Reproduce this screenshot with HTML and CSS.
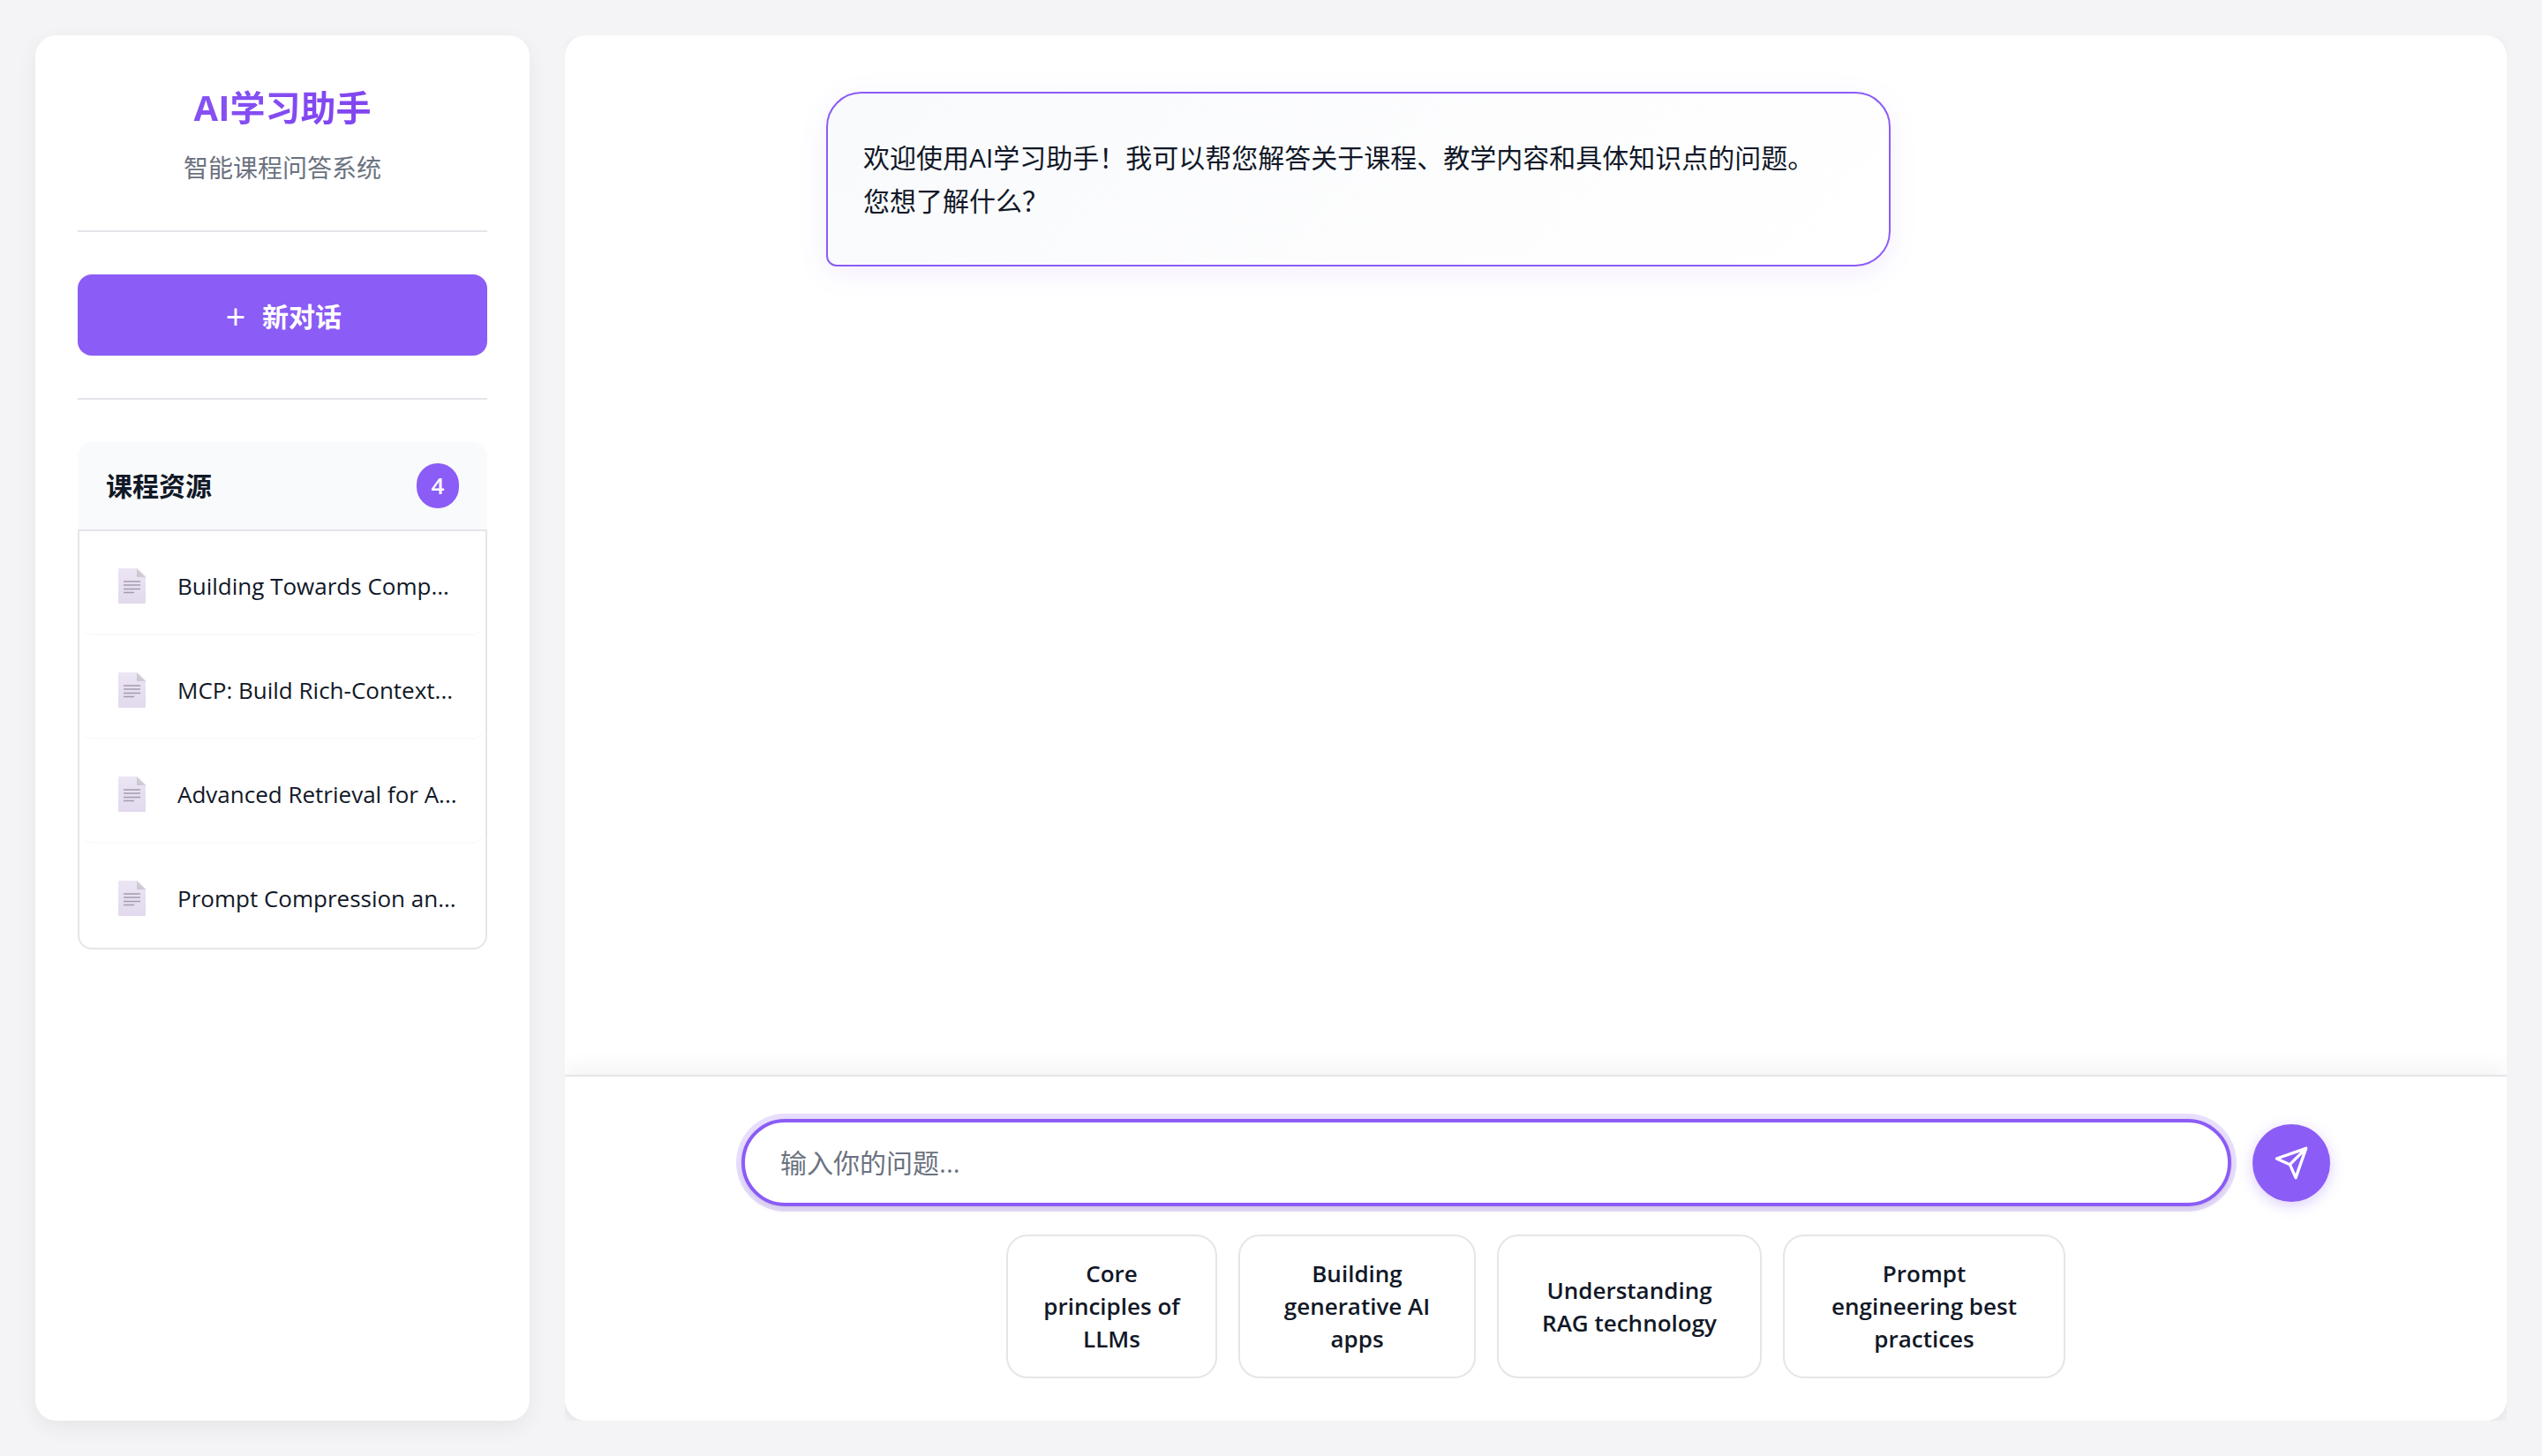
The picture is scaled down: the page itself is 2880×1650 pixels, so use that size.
FILE: index.html
```html
<!DOCTYPE html>
<html lang="zh-CN">
<head>
<meta charset="UTF-8">
<meta name="viewport" content="width=device-width, initial-scale=1">
<title>AI学习助手</title>
<link rel="stylesheet" href="styles.css">
</head>
<body>
<svg class="sprite" aria-hidden="true">
  <defs>
    <linearGradient id="page-fill" x1="0" y1="0" x2="0" y2="1">
      <stop offset="0" stop-color="#ece5f4"/>
      <stop offset="1" stop-color="#e2d9ee"/>
    </linearGradient>
    <linearGradient id="fold-fill" x1="0" y1="1" x2="1" y2="0">
      <stop offset="0" stop-color="#c9c3ce"/>
      <stop offset="1" stop-color="#dcd7e0"/>
    </linearGradient>
    <symbol id="doc" viewBox="0 0 31 40">
      <path d="M1 0H21L31 9V39Q31 40 30 40H1Q0 40 0 39V1Q0 0 1 0Z" fill="url(#page-fill)"/>
      <path d="M21 0L31 10H22Q21 10 21 9Z" fill="url(#fold-fill)"/>
      <path d="M6 15H25M6 19H25M6 23.500H25M6 27.500H18" stroke="#a49cae" stroke-width="1.500"/>
    </symbol>
  </defs>
</svg>
<div class="app">
  <aside class="sidebar">
    <header class="brand">
      <h1 class="brand-title">AI学习助手</h1>
      <p class="brand-subtitle">智能课程问答系统</p>
    </header>
    <div class="new-chat">
      <button class="new-chat-button" type="button"><span class="plus">+</span>新对话</button>
    </div>
    <section class="courses">
      <div class="courses-header">
        <h2 class="courses-title">课程资源</h2>
        <span class="badge">4</span>
      </div>
      <ul class="course-list">
        <li class="course"><svg class="doc-icon" aria-hidden="true"><use href="#doc"/></svg><span>Building Towards Comp...</span></li>
        <li class="course"><svg class="doc-icon" aria-hidden="true"><use href="#doc"/></svg><span>MCP: Build Rich-Context...</span></li>
        <li class="course"><svg class="doc-icon" aria-hidden="true"><use href="#doc"/></svg><span>Advanced Retrieval for A...</span></li>
        <li class="course"><svg class="doc-icon" aria-hidden="true"><use href="#doc"/></svg><span>Prompt Compression an...</span></li>
      </ul>
    </section>
  </aside>
  <main class="chat">
    <div class="chat-panel">
      <div class="messages">
        <div class="message">欢迎使用AI学习助手！我可以帮您解答关于课程、教学内容和具体知识点的问题。<br>您想了解什么？</div>
      </div>
      <footer class="composer">
        <form class="input-row">
          <input class="question" type="text" placeholder="输入你的问题..." aria-label="输入你的问题">
          <button class="send" type="button" aria-label="发送">
            <svg class="send-icon" viewBox="0 0 24 24" aria-hidden="true"><path d="M22 2L11 13M22 2L15 22L11 13L2 9Z"/></svg>
          </button>
        </form>
        <div class="suggestions">
          <button class="suggestion" type="button">Core principles of LLMs</button>
          <button class="suggestion" type="button">Building generative AI apps</button>
          <button class="suggestion" type="button">Understanding RAG technology</button>
          <button class="suggestion" type="button">Prompt engineering best practices</button>
        </div>
      </footer>
    </div>
  </main>
</div>
</body>
</html>
```
FILE: styles.css
```css
:root {
  --primary: #8b5cf6;
  --primary-dark: #7c3aed;
  --text: #111827;
  --muted: #6b7280;
  --border: #e5e5ea;
  --surface: #f9fafc;
  --page: #f4f4f7;
}

* {
  box-sizing: border-box;
  margin: 0;
  padding: 0;
}

body,
button,
input {
  font-family: "Open Sans", "Noto Sans CJK SC", sans-serif;
}

body {
  background: var(--page);
  color: var(--text);
}

button {
  border: 0;
  cursor: pointer;
}

.sprite {
  position: absolute;
  width: 0;
  height: 0;
}

.app {
  display: flex;
  gap: 40px;
  min-height: 100vh;
  padding: 40px;
}

.sidebar {
  flex: 0 0 560px;
  padding: 48px;
  border-radius: 24px;
  background: #fff;
  box-shadow: 0 8px 24px rgba(0, 0, 0, 0.06);
}

.brand {
  padding-bottom: 48px;
  border-bottom: 2px solid var(--border);
  text-align: center;
}

.brand-title {
  margin-bottom: 12px;
  background: linear-gradient(135deg, var(--primary), var(--primary-dark));
  background-clip: text;
  -webkit-background-clip: text;
  color: transparent;
  font-size: 40px;
  font-weight: 700;
  line-height: 68px;
}

.brand-subtitle {
  color: var(--muted);
  font-size: 28px;
  line-height: 45px;
}

.new-chat {
  padding: 48px 0;
  border-bottom: 2px solid var(--border);
}

.new-chat-button {
  display: flex;
  align-items: center;
  justify-content: center;
  gap: 16px;
  width: 100%;
  height: 92px;
  border-radius: 16px;
  background: var(--primary);
  color: #fff;
  font-size: 30px;
  font-weight: 700;
}

.plus {
  width: 28px;
  padding-top: 4px;
  font-size: 40px;
  font-weight: 400;
  line-height: 48px;
  text-align: center;
}

.courses {
  margin-top: 48px;
}

.courses-header {
  display: flex;
  align-items: center;
  justify-content: space-between;
  padding: 24px 32px;
  border-bottom: 2px solid var(--border);
  border-radius: 16px 16px 0 0;
  background: var(--surface);
}

.courses-title {
  font-size: 30px;
  font-weight: 700;
  line-height: 48px;
}

.badge {
  min-width: 48px;
  border-radius: 24px;
  background: var(--primary);
  color: #fff;
  font-size: 26px;
  font-weight: 600;
  line-height: 51px;
  text-align: center;
}

.course-list {
  display: flex;
  flex-direction: column;
  gap: 8px;
  padding-top: 8px;
  border: 2px solid var(--border);
  border-top: 0;
  border-radius: 0 0 16px 16px;
  list-style: none;
}

.course {
  display: flex;
  align-items: center;
  gap: 36px;
  height: 110px;
  padding: 0 32px 0 44px;
  border-bottom: 2px solid var(--surface);
  border-radius: 16px;
  font-size: 26px;
  line-height: 40px;
  white-space: nowrap;
}

.course:last-child {
  border-bottom-color: transparent;
}

.doc-icon {
  flex: none;
  width: 31px;
  height: 40px;
}

.chat {
  display: flex;
  flex: 1;
  min-width: 0;
  overflow: hidden;
}

.chat-panel {
  display: flex;
  flex: 1;
  flex-direction: column;
  min-width: 0;
  border-radius: 24px;
  background: #fff;
  box-shadow: 0 8px 24px rgba(0, 0, 0, 0.06);
}

.messages {
  flex: 1;
  width: 100%;
  max-width: 1800px;
  margin: 0 auto;
  padding: 64px 96px;
}

.message {
  width: 75%;
  padding: 48px 40px;
  border: 2px solid var(--primary);
  border-radius: 40px 40px 40px 12px;
  background: linear-gradient(135deg, var(--surface), #fff);
  box-shadow: 0 8px 32px rgba(139, 92, 246, 0.1);
  font-size: 30px;
  line-height: 49px;
}

.composer {
  padding: 48px;
  border-top: 2px solid var(--border);
  border-radius: 0 0 24px 24px;
  background: #fff;
  box-shadow: 0 -8px 24px rgba(0, 0, 0, 0.05);
}

.input-row {
  display: flex;
  align-items: center;
  gap: 24px;
  max-width: 1800px;
  margin: 0 auto 32px;
}

.question {
  flex: 1;
  min-width: 0;
  height: 99px;
  padding: 0 40px;
  border: 4px solid var(--primary);
  border-radius: 50px;
  outline: 0;
  background: #fff;
  box-shadow: 0 0 0 6px rgba(139, 92, 246, 0.2), 0 4px 6px rgba(0, 0, 0, 0.1);
  color: var(--text);
  font-size: 30px;
}

.question::placeholder {
  color: var(--muted);
}

.send {
  display: grid;
  flex: none;
  place-items: center;
  width: 88px;
  height: 88px;
  border-radius: 50%;
  background: var(--primary);
  box-shadow: 0 4px 16px rgba(139, 92, 246, 0.3);
}

.send-icon {
  width: 40px;
  height: 40px;
  fill: none;
  stroke: #fff;
  stroke-linecap: round;
  stroke-linejoin: round;
  stroke-width: 2;
}

.suggestions {
  display: grid;
  grid-template-columns: 239fr 269fr 300fr 320fr;
  gap: 24px;
  max-width: 1200px;
  margin: 0 auto;
}

.suggestion {
  padding: 24px 36px;
  border: 2px solid var(--border);
  border-radius: 24px;
  background: #fff;
  color: var(--text);
  font-size: 26px;
  font-weight: 600;
  line-height: 37px;
}
```
